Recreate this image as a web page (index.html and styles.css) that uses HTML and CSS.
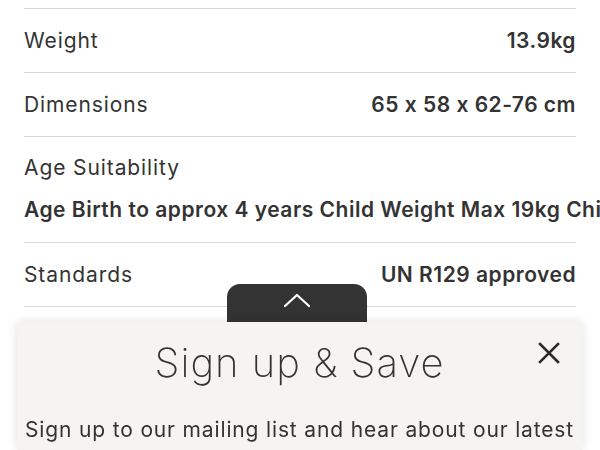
FILE: index.html
```html
<!DOCTYPE html>
<html lang="en">
<head>
<meta charset="utf-8">
<title>Product specs</title>
<link rel="stylesheet" href="styles.css">
</head>
<body>
<main class="specs">
  <div class="row">
    <span class="label">Weight</span>
    <span class="value">13.9kg</span>
  </div>
  <div class="row">
    <span class="label">Dimensions</span>
    <span class="value">65 x 58 x 62-76 cm</span>
  </div>
  <div class="row row-stacked">
    <span class="label">Age Suitability</span>
    <span class="value value-wide">Age Birth to approx 4 years Child Weight Max 19kg Child Height 40-105cm</span>
  </div>
  <div class="row">
    <span class="label">Standards</span>
    <span class="value">UN R129 approved</span>
  </div>
</main>

<aside class="signup">
  <button class="signup-tab" aria-label="Expand">
    <svg width="28" height="16" viewBox="0 0 28 16" fill="none"><path d="M2 14 L14 3 L26 14" stroke="#fff" stroke-width="2.2" stroke-linecap="round" stroke-linejoin="round"/></svg>
  </button>
  <div class="signup-panel">
    <div class="signup-head">
      <h2 class="signup-title">Sign up &amp; Save</h2>
      <button class="signup-close" aria-label="Close">
        <svg width="22" height="22" viewBox="0 0 22 22"><path d="M2 2 L20 20 M20 2 L2 20" stroke="#2b2b2b" stroke-width="2.6" stroke-linecap="square"/></svg>
      </button>
    </div>
    <p class="signup-text">Sign up to our mailing list and hear about our latest</p>
  </div>
</aside>
</body>
</html>
```
FILE: styles.css
```css
html, body {
  margin: 0;
  padding: 0;
  overflow: hidden;
  background: #ffffff;
}
body {
  width: 600px;
  height: 450px;
  font-family: Inter, "Open Sans", sans-serif;
  color: #333333;
}
.specs {
  padding: 8px 24px 0 24px;
}
.row {
  display: flex;
  justify-content: space-between;
  align-items: center;
  height: 63px;
  border-top: 1.5px solid #d6d6d6;
}
.row:last-child {
  border-bottom: 1.5px solid #d6d6d6;
}
.label {
  font-size: 21px;
  font-weight: 400;
  letter-spacing: 0.9px;
  white-space: nowrap;
}
.value {
  font-size: 21px;
  font-weight: 600;
  letter-spacing: 0.5px;
  white-space: nowrap;
}
.row-stacked {
  flex-direction: column;
  align-items: flex-start;
  justify-content: flex-start;
  height: auto;
  padding: 19px 0 20px 0;
  gap: 18px;
}
.label, .value {
  line-height: 24px;
}
.signup {
  position: fixed;
  left: 17px;
  right: 18px;
  top: 284px;
  bottom: 0;
  display: flex;
  flex-direction: column;
  align-items: center;
}
.signup-tab {
  width: 140px;
  height: 38px;
  background: #333333;
  border: none;
  border-radius: 13px 13px 0 0;
  display: flex;
  align-items: center;
  justify-content: center;
  padding: 0 0 6px 0;
  margin-left: -5px;
}
.signup-panel {
  align-self: stretch;
  flex: 1;
  background: #f6f4f0;
  box-shadow: 0 0 10px rgba(0, 0, 0, 0.12);
  display: flex;
  flex-direction: column;
  align-items: center;
}
.signup-head {
  position: relative;
  align-self: stretch;
  display: flex;
  justify-content: center;
  padding-top: 18px;
}
.signup-title {
  margin: 0;
  font-size: 40px;
  font-weight: 200;
  line-height: 46px;
  letter-spacing: 1px;
  color: #333333;
}
.signup-close {
  position: absolute;
  right: 22px;
  top: 20px;
  width: 22px;
  height: 22px;
  padding: 0;
  border: none;
  background: none;
}
.signup-text {
  margin: 32px 0 0 0;
  font-size: 21px;
  line-height: 24px;
  letter-spacing: 0.85px;
  white-space: nowrap;
}
```
